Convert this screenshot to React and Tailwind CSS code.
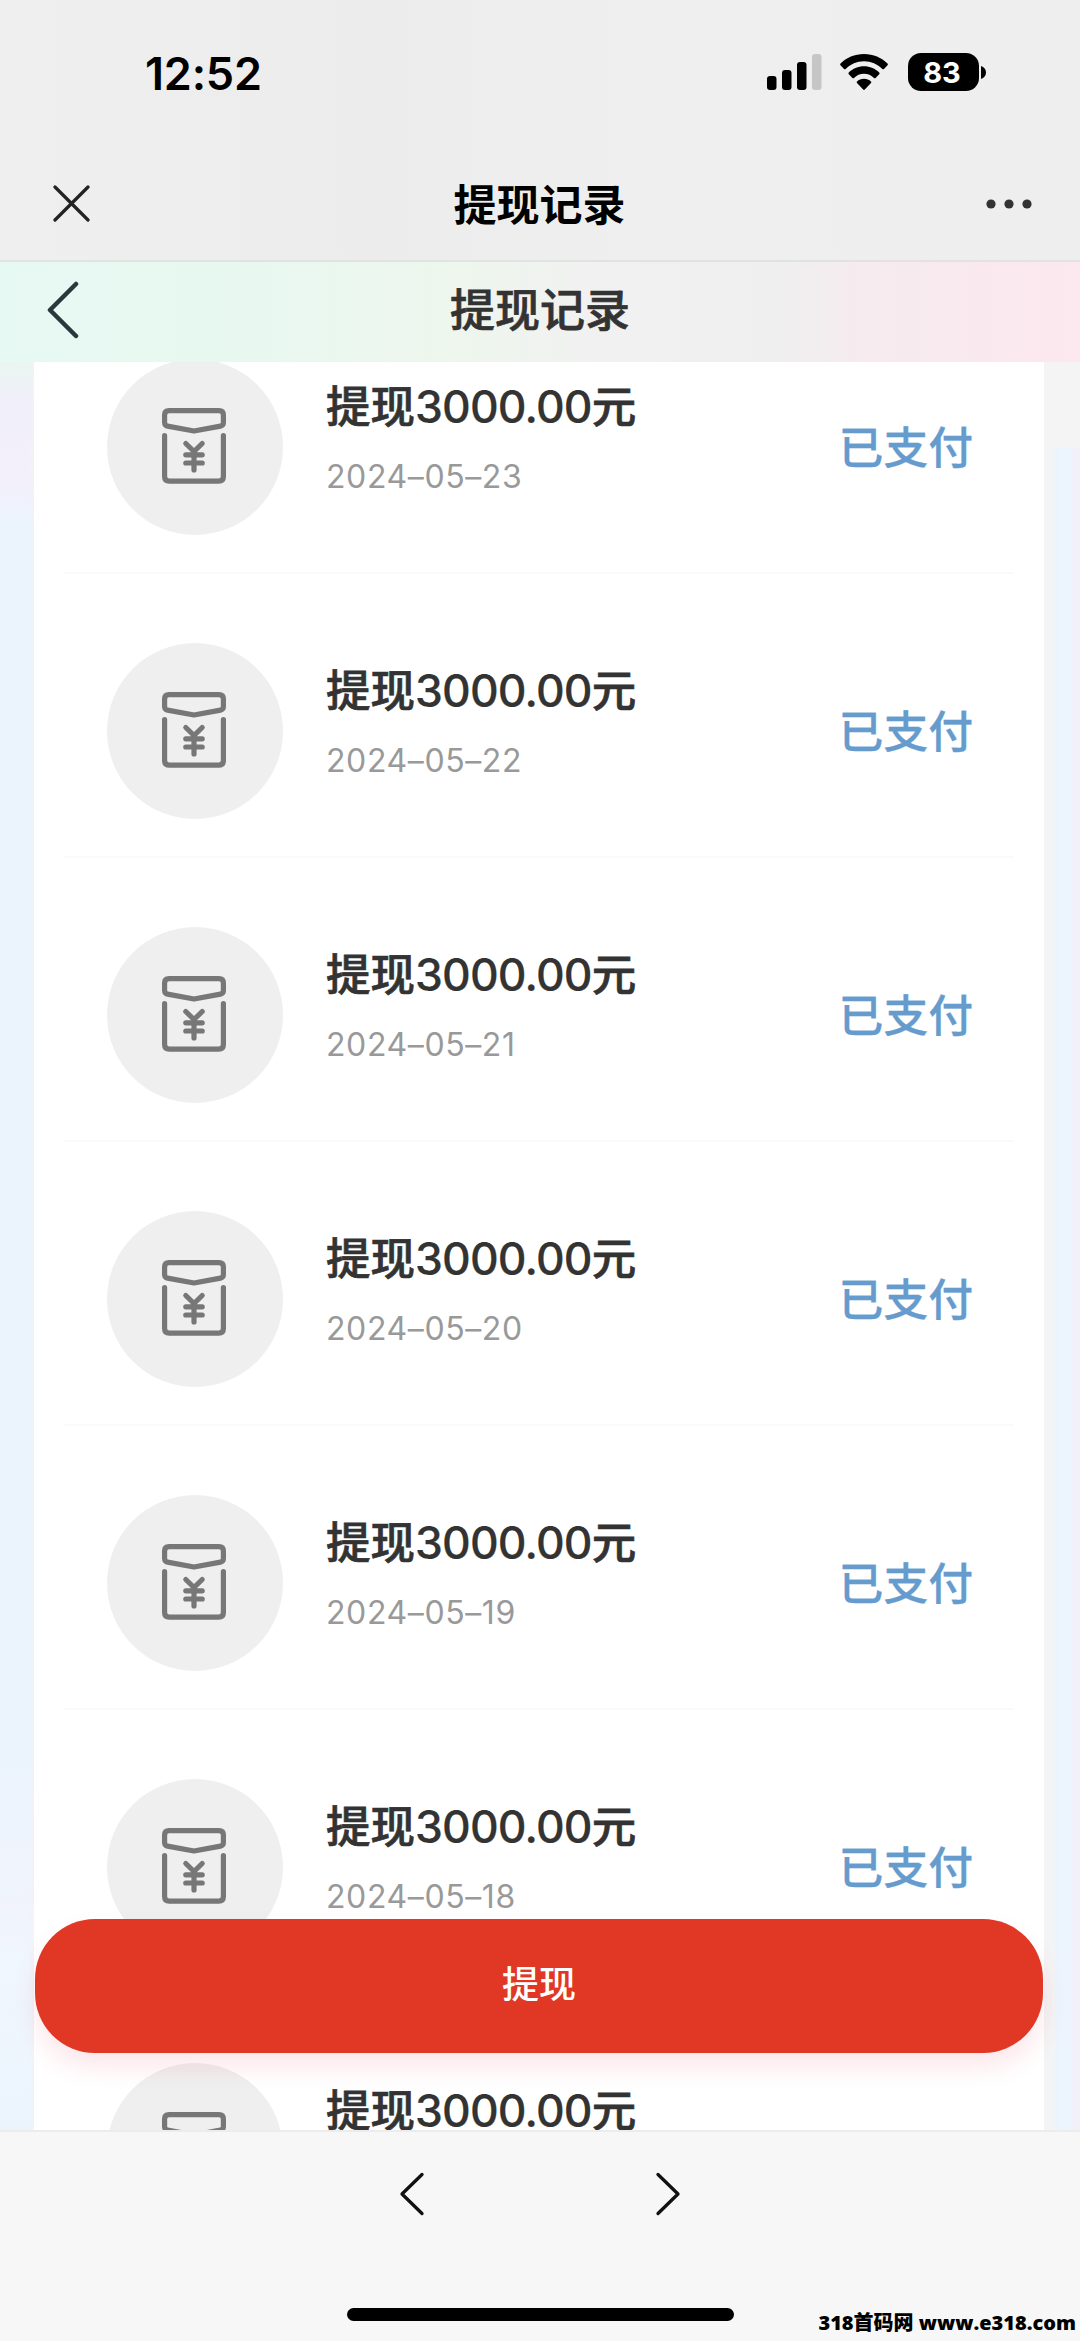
import React from "react";

const records = [
  "2024–05–23",
  "2024–05–22",
  "2024–05–21",
  "2024–05–20",
  "2024–05–19",
  "2024–05–18",
  "2024–05–17",
];

function StatusBar() {
  return (
    <div className="flex h-[146px] items-start justify-between pr-[94px] pl-[145px]">
      <span className="mt-[46px] text-[45px] leading-[56px] font-semibold tracking-[-0.2px] text-black">
        12:52
      </span>
      <div className="mt-[53px] flex h-[38px] items-center">
        <svg width="55" height="36" viewBox="0 0 55 36">
          <rect x="0" y="22" width="9.500" height="14" rx="3" />
          <rect x="15" y="16" width="9.500" height="20" rx="3" />
          <rect x="30" y="8" width="9.500" height="28" rx="3" />
          <rect x="45" y="0" width="9.500" height="36" rx="3" fill="#c6c6c6" />
        </svg>
        <svg className="ml-[18px]" width="48" height="37" viewBox="0 0 48 37">
          <path d="M24 0C14.700 0 6.300 3.700 0.500 9.600C0 10.100 0 10.800 0.500 11.300L4 14.900C4.500 15.400 5.200 15.400 5.700 14.900C10.400 10.200 16.900 7.300 24 7.300S37.600 10.200 42.300 14.900C42.800 15.400 43.500 15.400 44 14.900L47.500 11.300C48 10.800 48 10.100 47.500 9.600C41.700 3.700 33.300 0 24 0Z" />
          <path d="M24 12.300C18.100 12.300 12.700 14.700 8.800 18.500C8.300 19 8.300 19.700 8.800 20.200L12.400 23.900C12.900 24.400 13.500 24.400 14 23.900C16.600 21.300 20.100 19.700 24 19.700S31.400 21.300 34 23.900C34.500 24.400 35.100 24.400 35.600 23.900L39.200 20.200C39.700 19.700 39.700 19 39.200 18.500C35.300 14.700 29.900 12.300 24 12.300Z" />
          <path d="M24 24.700C21.200 24.700 18.800 25.700 17 27.400C16.500 27.900 16.500 28.500 17 29L23.200 35.500C23.700 36 24.300 36 24.800 35.500L31 29C31.500 28.500 31.500 27.900 31 27.400C29.200 25.700 26.800 24.700 24 24.700Z" />
        </svg>
        <div className="ml-[20px] flex h-[38px] w-[71px] items-center justify-center rounded-[13px] bg-black pr-[3px] text-[29px] leading-none font-bold text-white">
          83
        </div>
        <svg className="ml-[2px]" width="5" height="13" viewBox="0 0 5 13">
          <path d="M0 0C3 1 5 3.500 5 6.500S3 12 0 13Z" />
        </svg>
      </div>
    </div>
  );
}

function EnvelopeIcon() {
  return (
    <svg
      className="-mt-[2px] -ml-[2px]"
      width="66"
      height="78"
      viewBox="0 0 66 78"
      fill="none"
      stroke="#777777"
      strokeWidth="5.200"
      strokeLinecap="round"
      strokeLinejoin="round"
    >
      <path d="M8 3.600H58Q62.400 3.600 62.400 8V15.500Q62.400 18.500 59.500 19.100L33 24L6.500 19.100Q3.600 18.500 3.600 15.500V8Q3.600 3.600 8 3.600Z" />
      <path d="M3.600 28.500V69.500Q3.600 74.200 8.300 74.200H57.700Q62.400 74.200 62.400 69.500V28.500" />
      <path d="M24.800 36.500L33 44.500L41.200 36.500M33 44.500V63M24.800 47.800H41.200M24.800 56H41.200" />
    </svg>
  );
}

function Record({ date }) {
  return (
    <div className="flex h-[284px] items-start border-b-2 border-[#fafafa] pt-[69px] pr-[41px] pl-[43px]">
      <div className="flex size-[176px] shrink-0 items-center justify-center rounded-full bg-[#efefef]">
        <EnvelopeIcon />
      </div>
      <div className="ml-[43px] flex flex-1 flex-col pt-[15px]">
        <span className="text-[44.500px] leading-[66px] font-medium whitespace-nowrap text-[#333333] [-webkit-text-stroke:0.7px_#333333]">
          提现
          <span className="tracking-[-0.85px] [-webkit-text-stroke:0.2px_#333333]">3000.00</span>元
        </span>
        <span className="mt-[17px] text-[32px] leading-[40px] tracking-[0.6px] text-[#999999]">{date}</span>
      </div>
      <span className="mt-[56px] text-[44.800px] leading-[66px] font-medium text-[#659bcd] [-webkit-text-stroke:0.3px_#659bcd]">
        已支付
      </span>
    </div>
  );
}

export default function App() {
  return (
    <div className="flex h-[2341px] w-[1080px] flex-col overflow-hidden bg-[#efefef] font-['Inter','Noto_Sans_CJK_SC',sans-serif]">
      <header className="flex h-[262px] shrink-0 flex-col border-b-2 border-[#e0e3e2] bg-[linear-gradient(90deg,#efefef,#ececec_35%,#efefef_60%,#eeeeee)]">
        <StatusBar />
        <div className="flex h-[116px] items-center justify-between pt-[3px] pr-[48px] pl-[53px]">
          <svg width="37" height="37" viewBox="0 0 37 37" fill="none" stroke="#222" strokeWidth="3.200" strokeLinecap="round">
            <path d="M2 2L35 35M35 2L2 35" />
          </svg>
          <h1 className="pt-[3px] pl-[3px] text-[43px] leading-[60px] font-bold text-black">提现记录</h1>
          <svg width="46" height="10" viewBox="0 0 46 10" fill="#333">
            <circle cx="5" cy="5" r="4.600" />
            <circle cx="23" cy="5" r="4.600" />
            <circle cx="41" cy="5" r="4.600" />
          </svg>
        </div>
      </header>

      <div className="flex h-[100px] shrink-0 items-center justify-between bg-[linear-gradient(90deg,#e6f9f2,#e8f8f1_24%,#eef6ed_42%,#f1f1f1_55%,#efefef_72%,#f6ebee_80%,#fce8ee)] px-[46px] pb-[4px]">
        <svg width="34" height="58" viewBox="0 0 34 58" fill="none" stroke="#27393a" strokeWidth="4.500" strokeLinecap="round" strokeLinejoin="round">
          <path d="M30 3L4 29L30 55" />
        </svg>
        <h2 className="pt-[2px] text-[45px] leading-[60px] font-medium text-[#333333] [-webkit-text-stroke:0.7px_#333333]">
          提现记录
        </h2>
        <span className="w-[34px]" />
      </div>

      <main className="relative flex h-[1768px] shrink-0 items-start overflow-hidden">
        <div className="h-full w-[34px] shrink-0 bg-[linear-gradient(180deg,#eaf6f2,#f1effa_40px,#f3f0fb_120px,#ebf4fd_160px,#ebf4fd_1400px,#f0f3fc_1540px,#f0f7fe_1600px,#ebf4fd)]" />
        <div className="-mt-[72px] w-[1010px] shrink-0 bg-white px-[30px] shadow-[0_0_4px_2px_#f2f3f5]">
          {records.map((date) => (
            <Record key={date} date={date} />
          ))}
        </div>
        <div className="flex h-full flex-1 flex-col">
          <div className="h-[86px] bg-[#f4f4f4]" />
          <div className="flex-1 bg-[linear-gradient(90deg,#f3f4f5_10px,#ebf4fd_13px,#edf4fd_26px,#f2f1fb_30px)]" />
        </div>
        <button className="absolute top-[1557px] left-[35px] flex h-[134px] w-[1008px] items-center justify-center rounded-[60px] bg-[#e13725] pb-[4px] text-[37px] leading-none font-medium text-white shadow-[0_14px_24px_rgba(225,55,90,0.12)]">
          提现
        </button>
      </main>

      <footer className="flex flex-1 flex-col items-center border-t-2 border-[#ececec] bg-[#f7f7f7]">
        <nav className="mt-[40px] flex gap-[230px]">
          <svg width="26" height="44" viewBox="0 0 26 44" fill="none" stroke="#111" strokeWidth="3.300" strokeLinecap="round" strokeLinejoin="round">
            <path d="M23 2.500L3 22L23 41.500" />
          </svg>
          <svg width="26" height="44" viewBox="0 0 26 44" fill="none" stroke="#111" strokeWidth="3.300" strokeLinecap="round" strokeLinejoin="round">
            <path d="M3 2.500L23 22L3 41.500" />
          </svg>
        </nav>
        <div className="mt-[92px] h-[13px] w-[387px] shrink-0 rounded-full bg-black" />
        <p className="-mt-[12px] mr-[4px] self-end font-['Open_Sans','Noto_Sans_CJK_SC',sans-serif] text-[20px] leading-[28px] font-extrabold whitespace-nowrap text-black">
          318首码网 www.e318.com
        </p>
      </footer>
    </div>
  );
}
